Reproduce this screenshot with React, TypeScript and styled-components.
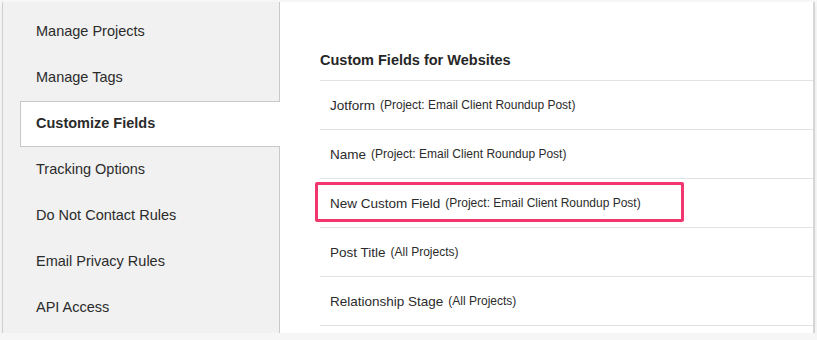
import styled, { createGlobalStyle } from "styled-components";

const GlobalStyle = createGlobalStyle`
  html, body {
    margin: 0;
    padding: 0;
    background: #f6f6f6;
  }
  body {
    font-family: "Liberation Sans", Arial, sans-serif;
    color: #2e2e2e;
  }
`;

const Page = styled.div`
  padding: 2px 0 0 2px;
`;

const Frame = styled.div`
  display: flex;
  width: 810px;
  height: 331px;
  background: #fff;
  border-left: 1px solid #cfcfcf;
  border-right: 2px solid #d6d6d6;
  box-shadow: 0 2px 0 #b5b5b5, 0 4px 2px #e2e2e2;
`;

const Sidebar = styled.nav`
  width: 277px;
  flex-shrink: 0;
  box-sizing: border-box;
  background: #f1f1f1;
  border-right: 1px solid #c9c9c9;
  padding-top: 7px;
  padding-left: 17px;
`;

const NavItem = styled.div<{ $active?: boolean }>`
  height: 46px;
  display: flex;
  align-items: center;
  padding: 0 0 3px 16px;
  box-sizing: border-box;
  font-size: 14.5px;
  font-weight: ${(p) => (p.$active ? 700 : 400)};
  color: #2b2b2b;
  ${(p) =>
    p.$active &&
    `
    background: #fff;
    border: 1px solid #c9c9c9;
    border-right: none;
    margin-right: -1px;
    padding-left: 15px;
  `}
`;

const Content = styled.main`
  flex: 1;
  padding: 48px 0 0 40px;
`;

const Heading = styled.h2`
  margin: 0;
  font-size: 14.5px;
  line-height: 20px;
  font-weight: 700;
  color: #262626;
  padding-bottom: 10px;
  border-bottom: 1px solid #e2e2e2;
`;

const Row = styled.div`
  position: relative;
  height: 48px;
  display: flex;
  align-items: center;
  gap: 5px;
  padding-left: 10px;
  border-bottom: 1px solid #e2e2e2;
`;

const FieldName = styled.span`
  font-size: 13.5px;
  color: #2b2b2b;
`;

const Scope = styled.span`
  font-size: 12px;
  color: #2b2b2b;
`;

const Highlight = styled.div`
  position: absolute;
  left: -5px;
  top: 3px;
  width: 369px;
  height: 40px;
  box-sizing: border-box;
  border: 3px solid #f2376f;
  border-radius: 2px;
  pointer-events: none;
`;

const navItems = [
  "Manage Projects",
  "Manage Tags",
  "Customize Fields",
  "Tracking Options",
  "Do Not Contact Rules",
  "Email Privacy Rules",
  "API Access",
];

const fields = [
  { name: "Jotform", scope: "(Project: Email Client Roundup Post)" },
  { name: "Name", scope: "(Project: Email Client Roundup Post)" },
  {
    name: "New Custom Field",
    scope: "(Project: Email Client Roundup Post)",
    marked: true,
  },
  { name: "Post Title", scope: "(All Projects)" },
  { name: "Relationship Stage", scope: "(All Projects)" },
];

export default function App() {
  return (
    <>
      <GlobalStyle />
      <Page>
        <Frame>
          <Sidebar>
            {navItems.map((item) => (
              <NavItem key={item} $active={item === "Customize Fields"}>
                {item}
              </NavItem>
            ))}
          </Sidebar>
          <Content>
            <Heading>Custom Fields for Websites</Heading>
            {fields.map((f) => (
              <Row key={f.name}>
                <FieldName>{f.name}</FieldName>
                <Scope>{f.scope}</Scope>
                {f.marked && <Highlight />}
              </Row>
            ))}
          </Content>
        </Frame>
      </Page>
    </>
  );
}
